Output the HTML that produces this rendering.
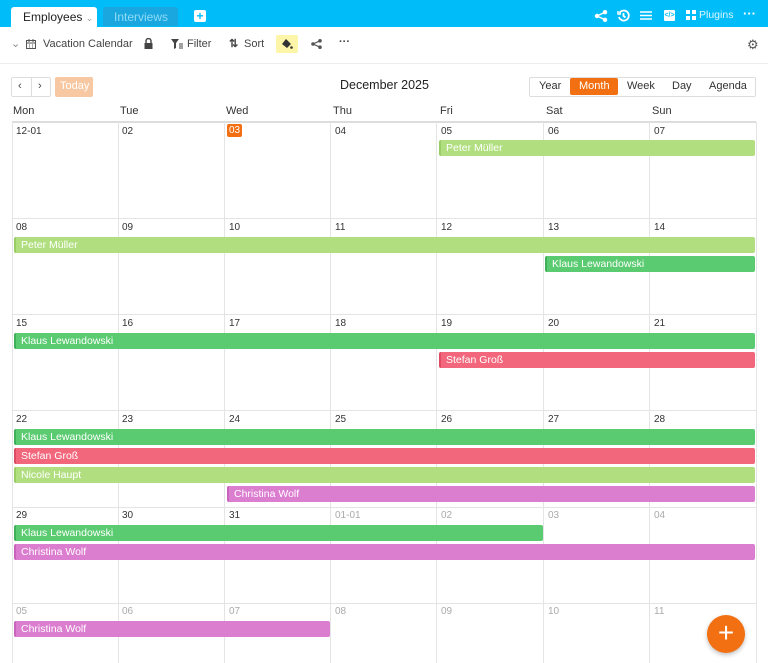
<!DOCTYPE html>
<html><head><meta charset="utf-8"><style>
*{box-sizing:border-box;margin:0;padding:0}
body{width:768px;height:663px;overflow:hidden;background:#fff;font-family:"Liberation Sans",sans-serif;position:relative;color:#222}
.a{position:absolute}
.top{left:0;top:0;width:768px;height:27px;background:#00bcf8}
.tab1{left:11px;top:7px;width:86px;height:20px;background:#fff;border-radius:3px 3px 0 0;font-size:12px;padding:3px 0 0 12px;color:#222}
.tab2{left:103px;top:7px;width:75px;height:19px;background:#1aa6de;border-radius:3px 3px 0 0;font-size:12px;padding:3px 0 0 11px;color:#8fdcf8}
.tb{font-size:11px;color:#444}
.vl{top:122px;width:1px;height:541px;background:#e4e4e4}
.hl{left:12px;width:744px;height:1px;background:#e4e4e4}
.d{font-size:10px;color:#333}
.g{color:#aaa}
.ev{height:16px;border-radius:2px;color:#fff;font-size:10.5px;padding:2px 0 0 5px;white-space:nowrap;overflow:hidden}
.k{background:#5acb70;border-left:2px solid #3fb059}
.s{background:#f2677b;border-left:2px solid #de4b62}
.n{background:#b1df80;border-left:2px solid #98cc64}
.c{background:#dc7ed0;border-left:2px solid #c964bd}
.wd{top:105px;font-size:11px;color:#333}
.vb{top:80px;font-size:11px;color:#333}
</style></head><body>
<div class="a top"></div>
<div class="a tab1">Employees <span style="color:#999;font-size:9px">&#8964;</span></div>
<div class="a tab2">Interviews</div>
<div class="a" style="left:194px;top:10px;width:12px;height:12px;background:#fff;border-radius:2px;color:#00bcf8;font-size:12px;line-height:12px;text-align:center;font-weight:bold">+</div>
<svg class="a" style="left:594px;top:10px" width="14" height="12" viewBox="0 0 14 12" fill="#fff"><circle cx="3" cy="6" r="2.2"/><circle cx="11" cy="2.2" r="2.2"/><circle cx="11" cy="9.8" r="2.2"/><path d="M3 6L11 2.2M3 6L11 9.8" stroke="#fff" stroke-width="1.4"/></svg>
<svg class="a" style="left:617px;top:9px" width="13" height="13" viewBox="0 0 13 13" fill="none" stroke="#fff" stroke-width="1.8"><path d="M2.5 4A5 5 0 1 1 2 8"/><path d="M6.5 4v3l2 1.5"/><path d="M1 2v3h3" stroke-width="1.4"/></svg>
<svg class="a" style="left:640px;top:10px" width="12" height="11" viewBox="0 0 12 11" stroke="#fff" stroke-width="1.5"><path d="M0 2h12M0 5.5h12M0 9h12"/></svg>
<div class="a" style="left:664px;top:10px;width:11px;height:11px;background:#fff;border-radius:1px;color:#00bcf8;font-size:7px;text-align:center;line-height:11px;font-weight:bold">&lt;/&gt;</div>
<div class="a" style="left:686px;top:10px;width:10px;height:10px;background:linear-gradient(#fff,#fff) 0 0/4px 4px no-repeat,linear-gradient(#fff,#fff) 6px 0/4px 4px no-repeat,linear-gradient(#fff,#fff) 0 6px/4px 4px no-repeat,linear-gradient(#fff,#fff) 6px 6px/4px 4px no-repeat"></div>
<div class="a" style="left:699px;top:9px;font-size:10.5px;color:#dff6ff">Plugins</div>
<div class="a" style="left:743px;top:6px;font-size:13px;color:#fff;font-weight:bold">···</div>

<div class="a tb" style="left:11px;top:37px;color:#888">&#8964;</div>
<svg class="a" style="left:26px;top:39px" width="10" height="10" viewBox="0 0 10 10" fill="none" stroke="#555" stroke-width="1"><rect x="0.5" y="1.5" width="9" height="8"/><path d="M0.5 4h9M3 0v3M7 0v3M3 6h1M6 6h1M3 8h1M6 8h1"/></svg>
<div class="a tb" style="left:43px;top:38px">Vacation Calendar</div>
<svg class="a" style="left:144px;top:38px" width="9" height="11" viewBox="0 0 9 11"><path d="M2 5V3a2.5 2.5 0 0 1 5 0v2" fill="none" stroke="#444" stroke-width="1.4"/><rect x="0.5" y="5" width="8" height="6" fill="#444"/></svg>
<svg class="a" style="left:171px;top:39px" width="12" height="10" viewBox="0 0 12 10" fill="#444"><path d="M0 0h8L5 4v5L3 10V4z"/><path d="M8 5h4M8 7h4M8 9h4" stroke="#444" stroke-width="1"/></svg>
<div class="a tb" style="left:187px;top:38px">Filter</div>
<div class="a tb" style="left:229px;top:37px;font-weight:bold">⇅</div>
<div class="a tb" style="left:244px;top:38px">Sort</div>
<div class="a" style="left:276px;top:35px;width:22px;height:18px;background:#fdf6a8;border-radius:2px"></div>
<svg class="a" style="left:281px;top:39px" width="12" height="11" viewBox="0 0 12 11" fill="#333"><path d="M5 0l5 5-4 4-5-4z"/><circle cx="10.5" cy="8.5" r="1.3"/></svg>
<svg class="a" style="left:311px;top:39px" width="11" height="10" viewBox="0 0 11 10" fill="#555"><circle cx="2" cy="5" r="1.8"/><circle cx="9" cy="1.8" r="1.8"/><circle cx="9" cy="8.2" r="1.8"/><path d="M2 5L9 1.8M2 5L9 8.2" stroke="#555" stroke-width="1.2"/></svg>
<div class="a tb" style="left:339px;top:36px;font-weight:bold">···</div>
<div class="a tb" style="left:747px;top:37px;font-size:13px;color:#555">⚙</div>
<div class="a" style="left:0;top:63px;width:768px;height:1px;background:#eee"></div>

<div class="a" style="left:11px;top:77px;width:40px;height:20px;border:1px solid #ddd;border-radius:2px"></div>
<div class="a" style="left:31px;top:77px;width:1px;height:20px;background:#ddd"></div>
<div class="a" style="left:18px;top:80px;font-size:11px;color:#444">‹</div>
<div class="a" style="left:38px;top:80px;font-size:11px;color:#444">›</div>
<div class="a" style="left:55px;top:77px;width:38px;height:20px;background:#f8c8a3;border-radius:2px;color:#fff;font-size:11px;padding:3px 0 0 5px">Today</div>
<div class="a" style="left:340px;top:78px;font-size:12.5px;color:#222">December 2025</div>
<div class="a" style="left:529px;top:77px;width:227px;height:20px;border:1px solid #ddd;border-radius:2px"></div>
<div class="a" style="left:570px;top:78px;width:48px;height:17px;background:#f27012;border-radius:2px"></div>
<div class="a vb" style="left:539px">Year</div>
<div class="a vb" style="left:579px;color:#fff">Month</div>
<div class="a vb" style="left:627px">Week</div>
<div class="a vb" style="left:672px">Day</div>
<div class="a vb" style="left:709px">Agenda</div>

<div class="a wd" style="left:13px">Mon</div><div class="a wd" style="left:120px">Tue</div><div class="a wd" style="left:226px">Wed</div><div class="a wd" style="left:333px">Thu</div><div class="a wd" style="left:440px">Fri</div><div class="a wd" style="left:546px">Sat</div><div class="a wd" style="left:652px">Sun</div>
<div class="a" style="left:12px;top:121px;width:744px;height:2px;background:#ddd"></div>

<div class="a vl" style="left:12px"></div><div class="a vl" style="left:118px"></div><div class="a vl" style="left:224px"></div><div class="a vl" style="left:330px"></div><div class="a vl" style="left:436px"></div><div class="a vl" style="left:543px"></div><div class="a vl" style="left:649px"></div><div class="a vl" style="left:756px"></div>
<div class="a hl" style="top:218px"></div><div class="a hl" style="top:314px"></div><div class="a hl" style="top:410px"></div><div class="a hl" style="top:507px"></div><div class="a hl" style="top:603px"></div>

<div class="a d" style="left:16px;top:126px">12-01</div><div class="a d" style="left:122px;top:126px">02</div>
<div class="a" style="left:227px;top:124px;width:15px;height:13px;background:#f27012;border-radius:2px;color:#fff;font-size:10px;padding:1px 0 0 2px">03</div>
<div class="a d" style="left:335px;top:126px">04</div><div class="a d" style="left:441px;top:126px">05</div><div class="a d" style="left:548px;top:126px">06</div><div class="a d" style="left:654px;top:126px">07</div>

<div class="a d" style="left:16px;top:222px">08</div><div class="a d" style="left:122px;top:222px">09</div><div class="a d" style="left:229px;top:222px">10</div><div class="a d" style="left:335px;top:222px">11</div><div class="a d" style="left:441px;top:222px">12</div><div class="a d" style="left:548px;top:222px">13</div><div class="a d" style="left:654px;top:222px">14</div>

<div class="a d" style="left:16px;top:318px">15</div><div class="a d" style="left:122px;top:318px">16</div><div class="a d" style="left:229px;top:318px">17</div><div class="a d" style="left:335px;top:318px">18</div><div class="a d" style="left:441px;top:318px">19</div><div class="a d" style="left:548px;top:318px">20</div><div class="a d" style="left:654px;top:318px">21</div>

<div class="a d" style="left:16px;top:414px">22</div><div class="a d" style="left:122px;top:414px">23</div><div class="a d" style="left:229px;top:414px">24</div><div class="a d" style="left:335px;top:414px">25</div><div class="a d" style="left:441px;top:414px">26</div><div class="a d" style="left:548px;top:414px">27</div><div class="a d" style="left:654px;top:414px">28</div>

<div class="a d" style="left:16px;top:510px">29</div><div class="a d" style="left:122px;top:510px">30</div><div class="a d" style="left:229px;top:510px">31</div><div class="a d g" style="left:335px;top:510px">01-01</div><div class="a d g" style="left:441px;top:510px">02</div><div class="a d g" style="left:548px;top:510px">03</div><div class="a d g" style="left:654px;top:510px">04</div>

<div class="a d g" style="left:16px;top:606px">05</div><div class="a d g" style="left:122px;top:606px">06</div><div class="a d g" style="left:229px;top:606px">07</div><div class="a d g" style="left:335px;top:606px">08</div><div class="a d g" style="left:441px;top:606px">09</div><div class="a d g" style="left:548px;top:606px">10</div><div class="a d g" style="left:654px;top:606px">11</div>

<div class="a ev n" style="left:439px;top:140px;width:316px">Peter Müller</div>
<div class="a ev n" style="left:14px;top:237px;width:741px">Peter Müller</div>
<div class="a ev k" style="left:545px;top:256px;width:210px">Klaus Lewandowski</div>
<div class="a ev k" style="left:14px;top:333px;width:741px">Klaus Lewandowski</div>
<div class="a ev s" style="left:439px;top:352px;width:316px">Stefan Groß</div>
<div class="a ev k" style="left:14px;top:429px;width:741px">Klaus Lewandowski</div>
<div class="a ev s" style="left:14px;top:448px;width:741px">Stefan Groß</div>
<div class="a ev n" style="left:14px;top:467px;width:741px">Nicole Haupt</div>
<div class="a ev c" style="left:227px;top:486px;width:528px">Christina Wolf</div>
<div class="a ev k" style="left:14px;top:525px;width:529px">Klaus Lewandowski</div>
<div class="a ev c" style="left:14px;top:544px;width:741px">Christina Wolf</div>
<div class="a ev c" style="left:14px;top:621px;width:316px">Christina Wolf</div>

<div class="a" style="left:707px;top:615px;width:38px;height:38px;border-radius:50%;background:#f27012;box-shadow:0 2px 5px rgba(0,0,0,.25);color:#fff;font-size:28px;line-height:36px;text-align:center">+</div>
</body></html>
